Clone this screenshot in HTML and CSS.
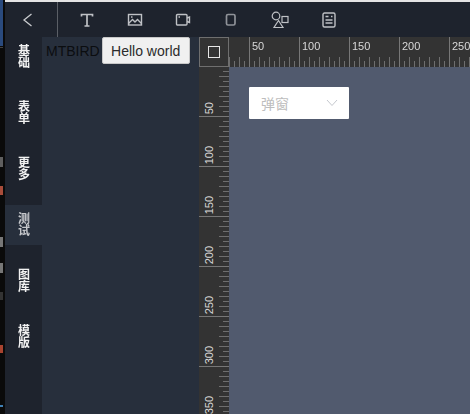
FILE: index.html
```html
<!DOCTYPE html>
<html lang="zh">
<head>
    <meta charset="UTF-8">
    <title>MTBIRD</title>
    <link rel="stylesheet" href="styles.css">
</head>

<body>
    <div class="desktop">
        <span class="scrap scrap-blue-top"></span>
        <span class="scrap scrap-line"></span>
        <span class="scrap scrap-grey-1"></span>
        <span class="scrap scrap-red-1"></span>
        <span class="scrap scrap-grey-2"></span>
        <span class="scrap scrap-grey-3"></span>
        <span class="scrap scrap-grey-4"></span>
        <span class="scrap scrap-red-2"></span>
        <span class="scrap scrap-blue"></span>
    </div>

    <div class="app">
        <div class="topbar">
            <div class="back">
                <svg width="12" height="14" viewBox="0 0 12 14"><path d="M9.5 1 2 7l7.5 6" /></svg>
            </div>
            <div class="tools">
                <svg class="tool tool-bold" width="16" height="16" viewBox="0 0 16 16"><path d="M2.5 4.5V2.5h11v2M8 2.5V14M5.5 14h5" /></svg>
                <svg class="tool tool-mid" width="16" height="14" viewBox="0 0 16 14"><rect x="1.5" y="1.5" width="13" height="10.5" /><path d="M1.5 10.5 5.5 6.5 8 9l2.5-2.500 4 4" /><path d="M4 4h1.5" /></svg>
                <svg class="tool tool-mid" width="16" height="14" viewBox="0 0 16 14"><rect x="1.5" y="1.5" width="10.5" height="10.5" rx="1" /><path d="M12 5 14.500 4v5.500L12 8.500" /><path d="M3.500 4h1.500" /></svg>
                <svg class="tool tool-bold tool-dim" width="16" height="14" viewBox="0 0 16 14"><rect x="3.5" y="1.5" width="8.5" height="10.5" rx="1.5" /></svg>
                <svg class="tool" width="18" height="18" viewBox="0 0 18 18"><circle cx="5" cy="5" r="3.8" /><rect x="11" y="5.5" width="6" height="6" /><path d="M7.5 9.500 12 16.500H3z" /></svg>
                <svg class="tool tool-mid" width="16" height="16" viewBox="0 0 16 16"><rect x="2" y="1" width="12" height="14" rx="1.5" /><path d="M4.500 4.500h3M10 4.500h1.500M4.500 8h7M4.500 11h7" /></svg>
            </div>
        </div>

        <div class="main">
            <ul class="sidebar">
                <li>基础</li>
                <li>表单</li>
                <li>更多</li>
                <li class="active">测试</li>
                <li>图库</li>
                <li>模版</li>
            </ul>

            <div class="panel">
                <span class="brand">MTBIRD</span>
                <button class="hello">Hello world</button>
            </div>

            <div class="stage">
                <div class="ruler-top">
                    <div class="corner"><span class="corner-box"></span></div>
                    <div class="ticks-x">
                        <span class="cell-x cell-skip"></span>
                        <span class="cell-x">50</span>
                        <span class="cell-x">100</span>
                        <span class="cell-x">150</span>
                        <span class="cell-x">200</span>
                        <span class="cell-x">250</span>
                    </div>
                </div>
                <div class="stage-body">
                    <div class="ticks-y">
                        <span class="cell-y"><b>50</b></span>
                        <span class="cell-y"><b>100</b></span>
                        <span class="cell-y"><b>150</b></span>
                        <span class="cell-y"><b>200</b></span>
                        <span class="cell-y"><b>250</b></span>
                        <span class="cell-y"><b>300</b></span>
                        <span class="cell-y"><b>350</b></span>
                    </div>
                    <div class="canvas">
                        <div class="select">
                            <span>弹窗</span>
                            <svg width="12" height="8" viewBox="0 0 12 8"><path d="M1 1l5 5.500L11 1" /></svg>
                        </div>
                    </div>
                </div>
            </div>
        </div>
    </div>
</body>
</html>
```

FILE: styles.css
```css
html, body {
    margin: 0;
    padding: 0;
}

body {
    width: 470px;
    height: 414px;
    overflow: hidden;
    display: flex;
    background: #000;
    font-family: "Liberation Sans", "Noto Sans CJK SC", sans-serif;
}

.desktop {
    width: 5px;
    height: 414px;
    flex: none;
    position: relative;
    background: #0a0a0a;
}

.scrap {
    position: absolute;
    left: 0;
    width: 3px;
}

.scrap-blue-top { top: 0; height: 46px; background: #2a4a7d; }
.scrap-line { top: 47px; height: 1px; background: #444; }
.scrap-grey-1 { top: 157px; height: 10px; background: #5f5f5f; }
.scrap-red-1 { top: 186px; height: 9px; background: #a84c3a; }
.scrap-grey-2 { top: 237px; height: 10px; background: #777; }
.scrap-grey-3 { top: 263px; height: 10px; background: #777; }
.scrap-grey-4 { top: 292px; height: 8px; background: #333; }
.scrap-red-2 { top: 345px; height: 8px; background: #a8432f; }
.scrap-blue { top: 405px; height: 2px; background: #3f7fb5; }

.app {
    width: 465px;
    flex: none;
    display: flex;
    flex-direction: column;
}

.topbar {
    height: 35px;
    margin-top: 2px;
    display: flex;
    background: #1e232d;
    box-shadow: 0 -2px 0 #e4e4e4;
}

.back {
    width: 53px;
    height: 35px;
    box-sizing: border-box;
    padding-right: 7px;
    display: flex;
    align-items: center;
    justify-content: center;
    border-right: 1px solid #5b5f66;
}

.back svg path {
    fill: none;
    stroke: #c9cbce;
    stroke-width: 1.3;
}

.tools {
    display: flex;
    align-items: center;
    padding-left: 21px;
    gap: 32px;
}

.tool {
    fill: none;
    stroke: #bfc1c5;
    stroke-width: 1.2;
}

.tool-mid {
    stroke-width: 1.4;
}

.tool-bold {
    stroke-width: 1.7;
}

.tool-dim {
    stroke: #8f9298;
}

.main {
    flex: 1;
    display: flex;
    min-height: 0;
}

.sidebar {
    width: 37px;
    flex: none;
    margin: 0;
    padding: 0;
    list-style: none;
    background: #1e232d;
    display: flex;
    flex-direction: column;
    gap: 16px;
}

.sidebar li {
    height: 40px;
    width: 12px;
    padding: 0 12px 0 13px;
    display: flex;
    align-items: center;
    justify-content: center;
    text-align: center;
    font-size: 12px;
    line-height: 12px;
    font-weight: 700;
    color: #f2f2f2;
    will-change: transform;
}

.sidebar li.active {
    background: #272f3c;
    color: #c5c7cb;
}

.panel {
    width: 157px;
    flex: none;
    box-sizing: border-box;
    padding-left: 4px;
    background: #272f3c;
    display: flex;
    align-items: flex-start;
    gap: 2px;
}

.brand {
    margin-top: 6px;
    font-size: 14px;
    line-height: 16px;
    color: #0b0d10;
}

.hello {
    width: 88px;
    height: 27px;
    padding: 0;
    border: 1px solid #c8c8c8;
    border-radius: 2px;
    background: #f0f0f0;
    color: #2b2b2b;
    font-family: inherit;
    font-size: 14px;
}

.stage {
    flex: 1;
    display: flex;
    flex-direction: column;
    min-width: 0;
}

.ruler-top {
    height: 30px;
    flex: none;
    display: flex;
    background: #333;
}

.corner {
    width: 30px;
    height: 30px;
    flex: none;
    box-sizing: border-box;
    border: 1px solid #6f6f6f;
    display: flex;
    align-items: center;
    justify-content: center;
}

.corner-box {
    width: 10px;
    height: 10px;
    border: 1.5px solid #e6e6e6;
}

.ticks-x {
    flex: 1;
    display: flex;
    overflow: hidden;
    background:
        repeating-linear-gradient(to right, #6e6e6e 0 1px, transparent 1px 10px) 0 100% / 100% 10px no-repeat,
        repeating-linear-gradient(to right, #6e6e6e 0 1px, transparent 1px 10px) 5px 100% / 100% 6px no-repeat;
}

.cell-x {
    width: 50px;
    flex: none;
    box-sizing: border-box;
    padding: 3px 0 0 2px;
    border-left: 1px solid #777;
    font-size: 11px;
    line-height: 12px;
    color: #d8d8d8;
    will-change: transform;
}

.cell-skip {
    width: 20px;
    border-left: none;
}

.stage-body {
    flex: 1;
    display: flex;
    min-height: 0;
}

.ticks-y {
    width: 30px;
    flex: none;
    background:
        repeating-linear-gradient(to bottom, #6e6e6e 0 1px, transparent 1px 10px) 100% 9px / 10px 100% no-repeat,
        repeating-linear-gradient(to bottom, #6e6e6e 0 1px, transparent 1px 10px) 100% 4px / 6px 100% no-repeat,
        #333;
}

.cell-y {
    height: 50px;
    box-sizing: border-box;
    padding-bottom: 2px;
    border-bottom: 1px solid #777;
    display: flex;
    align-items: flex-end;
}

.cell-y b {
    margin-left: 4px;
    writing-mode: vertical-rl;
    transform: rotate(180deg);
    font-size: 11px;
    font-weight: normal;
    line-height: 12px;
    color: #d8d8d8;
}

.canvas {
    flex: 1;
    background: #515a6e;
    padding: 20px 0 0 20px;
}

.select {
    width: 100px;
    height: 32px;
    box-sizing: border-box;
    padding: 0 11px 1px 12px;
    background: #fff;
    border-radius: 1px;
    display: flex;
    align-items: center;
    justify-content: space-between;
    font-size: 14px;
    color: #bdbdbd;
}

.select svg {
    fill: none;
    stroke: #c5c8ce;
    stroke-width: 1;
}
```
